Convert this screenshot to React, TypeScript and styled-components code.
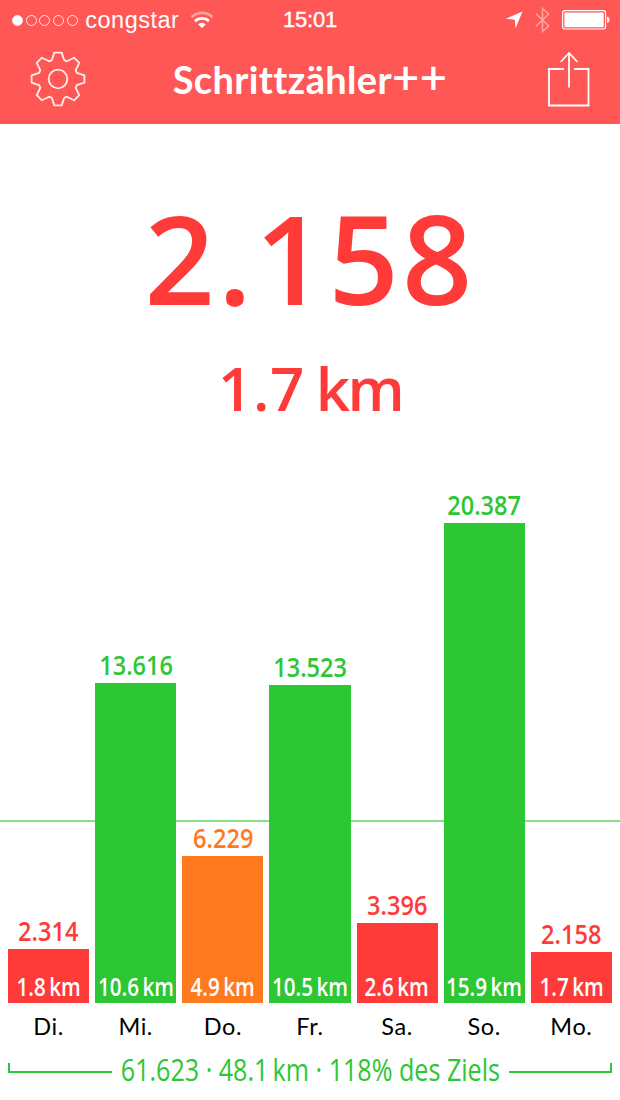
import React from "react";
import styled, { createGlobalStyle } from "styled-components";

const GREEN = "#2dc634";
const RED = "#ff3b3a";
const ORANGE = "#ff7a1f";

const GlobalStyle = createGlobalStyle`
  *, *::before, *::after { box-sizing: border-box; }
  body { margin: 0; background: #fff; }
`;

const Screen = styled.main`
  width: 620px;
  height: 1100px;
  display: flex;
  flex-direction: column;
  overflow: hidden;
  background: #fff;
  font-family: "Open Sans", sans-serif;
`;

const Header = styled.header`
  height: 124px;
  background: #ff5656;
  color: #fff;
  display: flex;
  flex-direction: column;
`;

const StatusBar = styled.div`
  height: 40px;
  display: grid;
  grid-template-columns: 1fr auto 1fr;
  align-items: center;
  padding: 0 10px 0 12px;
  font-family: "Liberation Sans", Arial, sans-serif;
  line-height: 40px;
`;

const StatusLeft = styled.div`
  display: flex;
  align-items: center;
`;

const StatusRight = styled.div`
  display: flex;
  align-items: center;
  justify-content: flex-end;
`;

const Signal = styled.div`
  display: flex;
  gap: 2.7px;
  margin-right: 7.5px;
`;

const Dot = styled.i<{ $on?: boolean }>`
  width: 11px;
  height: 11px;
  border-radius: 50%;
  border: 1px solid #ffe9e0;
  background: ${(p) => (p.$on ? "#fff" : "transparent")};
`;

const Carrier = styled.span`
  font-size: 23.5px;
  letter-spacing: 0.5px;
  margin-right: 10.5px;
`;

const Clock = styled.span`
  font-size: 22px;
  letter-spacing: -0.2px;
  margin-right: 2px;
  -webkit-text-stroke: 0.4px #fff;
`;

const NavBar = styled.div`
  height: 84px;
  display: flex;
  justify-content: space-between;
  padding: 10px 30px 0;
`;

const Title = styled.h1`
  margin: 0 0 0 -14px;
  font: 700 38px/58px Lato, sans-serif;
  letter-spacing: 0.35px;
  white-space: nowrap;
`;

const Pluses = styled.span`
  font-size: 47px;
  font-weight: 600;
  line-height: 0;
`;

const Summary = styled.section`
  height: 346px;
  padding-top: 58px;
  display: flex;
  flex-direction: column;
  align-items: center;
  color: ${RED};
  font-weight: 600;
  white-space: nowrap;
`;

const Steps = styled.div`
  font-size: 123px;
  line-height: 152px;
  letter-spacing: 3.2px;
`;

const Distance = styled.div`
  font-size: 60px;
  line-height: 80px;
  margin-top: 14px;
  letter-spacing: 0.7px;
`;

const Unit = styled.span`
  letter-spacing: -2.6px;
`;

const Chart = styled.section`
  position: relative;
  height: 533px;
  display: flex;
  align-items: flex-end;
  gap: 6px;
  padding: 0 8px;
`;

const GoalLine = styled.div`
  position: absolute;
  left: 0;
  right: 0;
  bottom: 181px;
  height: 2px;
  background: #86df8a;
`;

const Day = styled.div`
  position: relative;
  flex: 1;
  min-width: 0;
  display: flex;
  flex-direction: column;
  align-items: center;
`;

const Squeezed = styled.span<{ $by: number }>`
  display: inline-block;
  white-space: nowrap;
  transform: scaleX(${(p) => p.$by});
`;

const StepLabel = styled.div<{ $color: string }>`
  color: ${(p) => p.$color};
  font-size: 27.5px;
  font-weight: 600;
  line-height: 36px;
  display: flex;
  justify-content: center;
`;

const Bar = styled.div<{ $color: string }>`
  width: 100%;
  background: ${(p) => p.$color};
  display: flex;
  align-items: flex-end;
  justify-content: center;
  color: #fff;
  font-size: 25.5px;
  font-weight: 600;
  line-height: 34px;
`;

const DayNames = styled.div`
  display: flex;
  gap: 6px;
  padding: 0 8px;
  height: 48px;
`;

const DayName = styled.div`
  flex: 1;
  text-align: center;
  color: #000;
  font: 400 23.5px/46px Lato, sans-serif;
  letter-spacing: 0.6px;
`;

const Footer = styled.footer`
  display: flex;
  justify-content: center;
  height: 42px;
  padding: 0 8px;
  color: ${GREEN};
`;

const Bracket = styled.div<{ $side: "left" | "right" }>`
  flex: none;
  width: 103.5px;
  height: 10px;
  margin-top: 12px;
  border-bottom: 2px solid ${GREEN};
  border-${(p) => p.$side}: 2px solid ${GREEN};
`;

const Total = styled.div`
  flex: 1;
  min-width: 0;
  display: flex;
  justify-content: center;
  font-size: 30.5px;
  font-weight: 450;
  line-height: 37px;
`;

const days = [
  { name: "Di.", steps: "2.314", km: "1.8", height: 54, color: RED },
  { name: "Mi.", steps: "13.616", km: "10.6", height: 320.4, color: GREEN },
  { name: "Do.", steps: "6.229", km: "4.9", height: 147, color: ORANGE },
  { name: "Fr.", steps: "13.523", km: "10.5", height: 318.3, color: GREEN },
  { name: "Sa.", steps: "3.396", km: "2.6", height: 80, color: RED },
  { name: "So.", steps: "20.387", km: "15.9", height: 480.2, color: GREEN },
  { name: "Mo.", steps: "2.158", km: "1.7", height: 51, color: RED },
];

const gearTooth: [number, number][] = [
  [-6.2, -18.8],
  [-3.7, -26.4],
  [3.7, -26.4],
  [6.2, -18.8],
];

const gearPath =
  "M" +
  Array.from({ length: 8 }, (_, i) => {
    const a = (i * Math.PI) / 4;
    return gearTooth
      .map(([x, y]) => {
        const px = x * Math.cos(a) - y * Math.sin(a);
        const py = x * Math.sin(a) + y * Math.cos(a);
        return `${px.toFixed(2)} ${py.toFixed(2)}`;
      })
      .join("L");
  }).join("L") +
  "Z";

const GearIcon = () => (
  <svg width="56" height="58" viewBox="-28 -29 56 58" fill="none" stroke="#fff0e8" strokeWidth="1.8" strokeLinejoin="round">
    <path d={gearPath} />
    <circle r="9.3" />
  </svg>
);

const ShareIcon = () => (
  <svg width="42" height="58" viewBox="0 0 42 58" fill="none" stroke="#fff" strokeWidth="1.8">
    <path d="M16 19H1V55.5H40.5V19H26M21 37.5V3M12.5 12L21 3L29.5 12" />
  </svg>
);

const WifiIcon = () => (
  <svg width="24" height="18" viewBox="0 0 24 18" fill="none" strokeWidth="2.6">
    <path d="M1.5 6.2A15 15 0 0 1 22.5 6.2" stroke="#ffa19a" />
    <path d="M5 10.2A10 10 0 0 1 19 10.2" stroke="#fff" />
    <path d="M12 17L8.2 13.4A5.4 5.4 0 0 1 15.8 13.4Z" fill="#fff" />
  </svg>
);

const LocationIcon = () => (
  <svg width="18" height="18" viewBox="0 0 18 18">
    <path d="M17.5 .5L10.5 17.5L9.8 8.7L.5 7.9Z" fill="#fff" />
  </svg>
);

const BluetoothIcon = () => (
  <svg width="15" height="26" viewBox="0 0 15 26" fill="none" stroke="#ffa5a0" strokeWidth="1.6">
    <path d="M.8 6.5L13.6 19L7.5 24.5V1.5L13.6 7L.8 19.5" />
  </svg>
);

const BatteryIcon = () => (
  <svg width="48" height="20" viewBox="0 0 48 20">
    <rect x=".6" y=".6" width="43" height="18.4" rx="2.4" fill="none" stroke="#fff" strokeWidth="1.1" />
    <rect x="2.4" y="2.4" width="39.4" height="14.8" rx="1" fill="#fff" />
    <path d="M45 6.5Q47.6 7 47.6 9.8T45 13.2Z" fill="#fff" />
  </svg>
);

const StatusIcons = styled.div`
  display: flex;
  align-items: center;
  gap: 12px;
`;

export default function App() {
  return (
    <>
      <GlobalStyle />
      <Screen>
        <Header>
          <StatusBar>
            <StatusLeft>
              <Signal>
                <Dot $on />
                <Dot />
                <Dot />
                <Dot />
                <Dot />
              </Signal>
              <Carrier>congstar</Carrier>
              <WifiIcon />
            </StatusLeft>
            <Clock>15:01</Clock>
            <StatusRight>
              <StatusIcons>
                <LocationIcon />
                <BluetoothIcon />
                <BatteryIcon />
              </StatusIcons>
            </StatusRight>
          </StatusBar>
          <NavBar>
            <GearIcon />
            <Title>
              Schrittzähler<Pluses>++</Pluses>
            </Title>
            <ShareIcon />
          </NavBar>
        </Header>
        <Summary>
          <Steps>2.158</Steps>
          <Distance>
            1.7&#8201;<Unit>km</Unit>
          </Distance>
        </Summary>
        <Chart>
          <GoalLine />
          {days.map((d) => (
            <Day key={d.name}>
              <StepLabel $color={d.color}>
                <Squeezed $by={0.855}>{d.steps}</Squeezed>
              </StepLabel>
              <Bar $color={d.color} style={{ height: d.height }}>
                <Squeezed $by={0.81}>{d.km}&#8201;km</Squeezed>
              </Bar>
            </Day>
          ))}
        </Chart>
        <DayNames>
          {days.map((d) => (
            <DayName key={d.name}>{d.name}</DayName>
          ))}
        </DayNames>
        <Footer>
          <Bracket $side="left" />
          <Total>
            <Squeezed $by={0.823}>61.623 · 48.1&#8201;km · 118% des Ziels</Squeezed>
          </Total>
          <Bracket $side="right" />
        </Footer>
      </Screen>
    </>
  );
}
